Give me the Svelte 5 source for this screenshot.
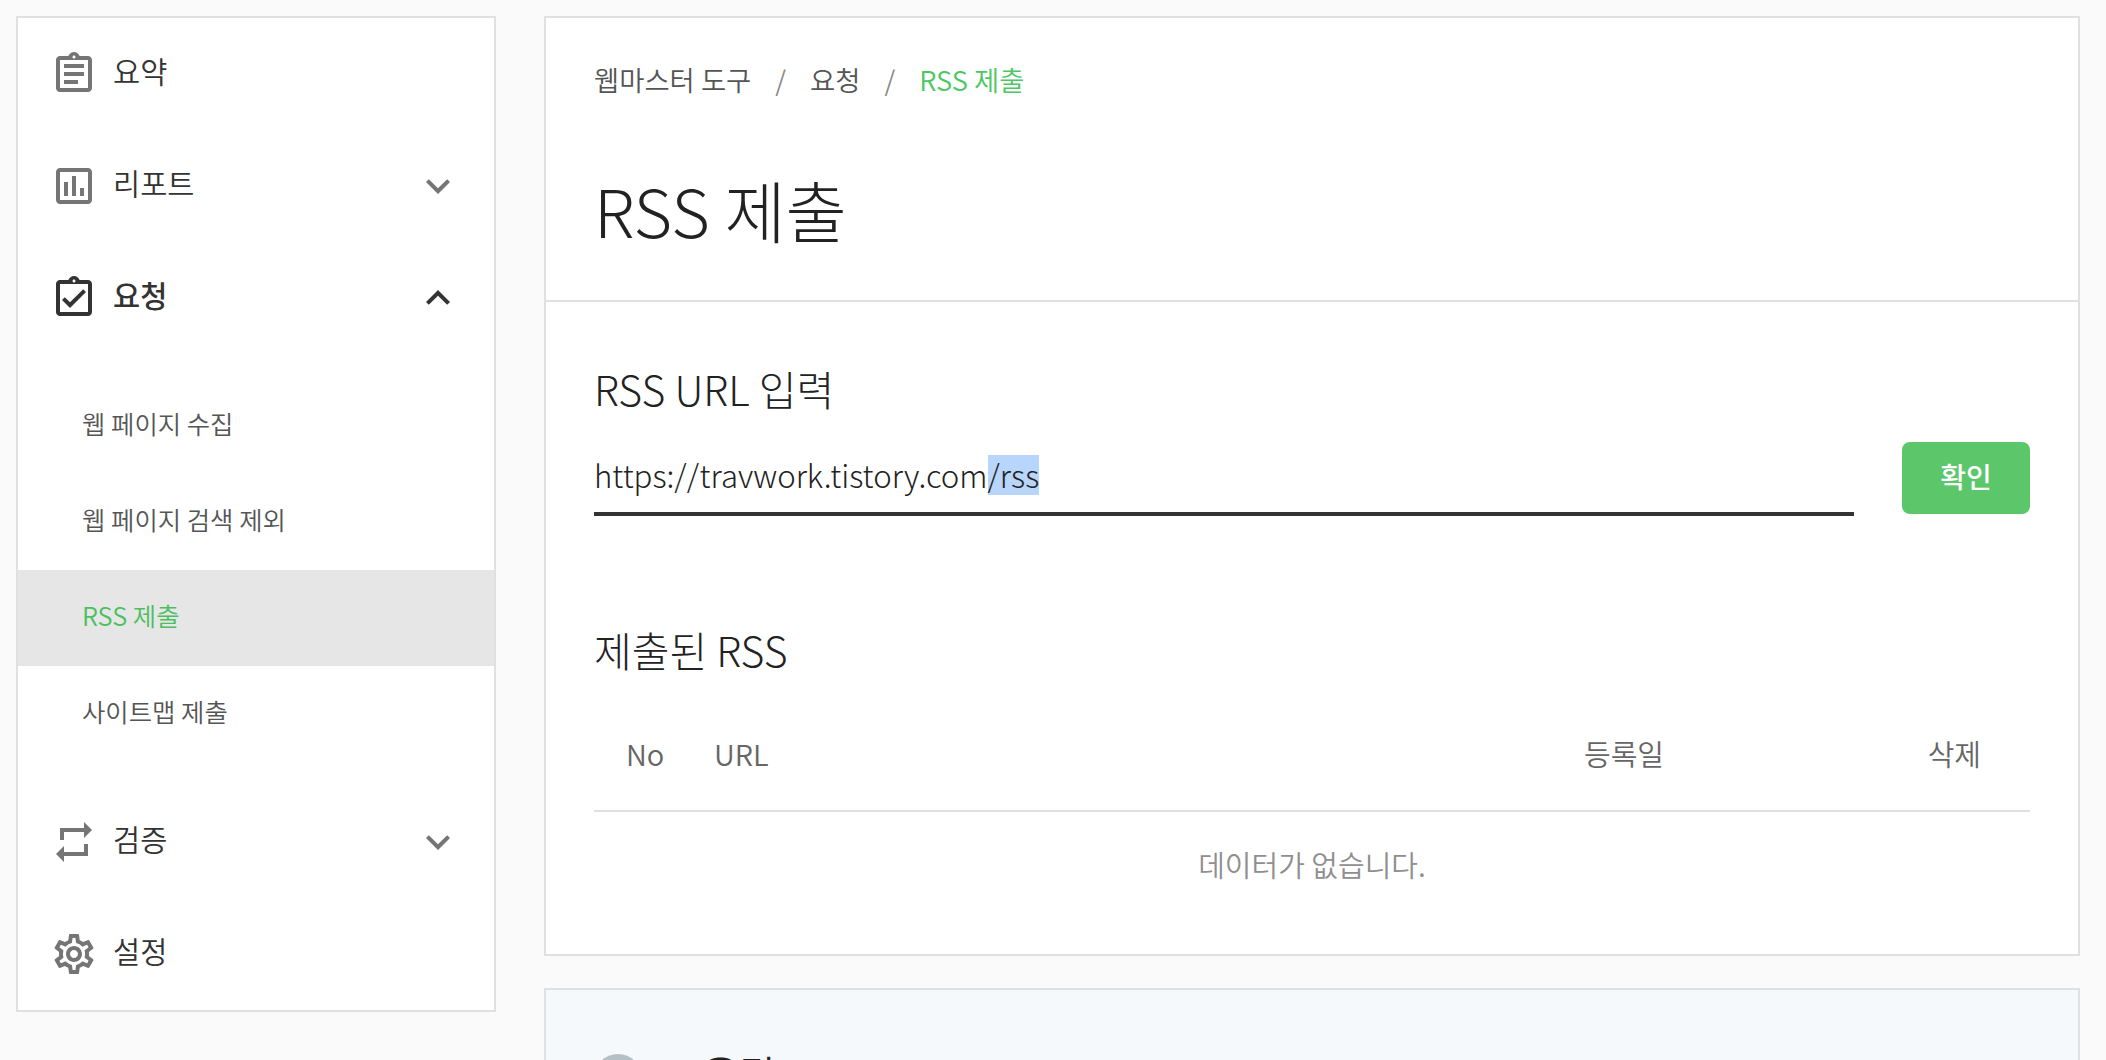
<script>
    const clip = "M19 3h-4.18C14.4 1.84 13.3 1 12 1c-1.3 0-2.4.84-2.82 2H5c-.14 0-.27.01-.4.04-.39.08-.74.28-1.01.55-.18.18-.33.4-.43.64-.1.23-.16.49-.16.77v14c0 .27.06.54.16.78s.25.45.43.64c.27.27.62.47 1.01.55.13.02.26.03.4.03h14c1.1 0 2-.9 2-2V5c0-1.1-.9-2-2-2zm-7-.25c.41 0 .75.34.75.75s-.34.75-.75.75-.75-.34-.75-.75.34-.75.75-.75zM19 19H5V5h14v14z";
    const icons = {
        summary: "M7 15h7v2H7zm0-4h10v2H7zm0-4h10v2H7z" + clip,
        report: "M19 3H5c-1.1 0-2 .9-2 2v14c0 1.1.9 2 2 2h14c1.1 0 2-.9 2-2V5c0-1.1-.9-2-2-2zm0 16H5V5h14v14zM7 10h2v7H7zm4-3h2v10h-2zm4 6h2v4h-2z",
        request: "M18 9l-1.41-1.42L10 14.17l-2.59-2.58L6 13l4 4z" + clip,
        verify: "M7 7h10v3l4-4-4-4v3H5v6h2V7zm10 10H7v-3l-4 4 4 4v-3h12v-6h-2v4z",
        settings: "M19.43 12.98c.04-.32.07-.64.07-.98 0-.34-.03-.66-.07-.98l2.11-1.65c.19-.15.24-.42.12-.64l-2-3.46c-.09-.16-.26-.25-.44-.25-.06 0-.12.01-.17.03l-2.49 1c-.52-.4-1.08-.73-1.69-.98l-.38-2.65C14.46 2.18 14.25 2 14 2h-4c-.25 0-.46.18-.49.42l-.38 2.65c-.61.25-1.17.59-1.69.98l-2.49-1c-.06-.02-.12-.03-.18-.03-.17 0-.34.09-.43.25l-2 3.46c-.13.22-.07.49.12.64l2.11 1.65c-.04.32-.07.65-.07.98 0 .33.03.66.07.98l-2.11 1.65c-.19.15-.24.42-.12.64l2 3.46c.09.16.26.25.44.25.06 0 .12-.01.17-.03l2.49-1c.52.4 1.08.73 1.69.98l.38 2.65c.03.24.24.42.49.42h4c.25 0 .46-.18.49-.42l.38-2.65c.61-.25 1.17-.59 1.69-.98l2.49 1c.06.02.12.03.18.03.17 0 .34-.09.43-.25l2-3.46c.12-.22.07-.49-.12-.64l-2.11-1.65zm-1.98-1.71c.04.31.05.52.05.73 0 .21-.02.43-.05.73l-.14 1.13.89.7 1.08.84-.7 1.21-1.27-.51-1.04-.42-.9.68c-.43.32-.84.56-1.25.73l-1.06.43-.16 1.13-.2 1.35h-1.4l-.19-1.35-.16-1.13-1.06-.43c-.43-.18-.83-.41-1.23-.71l-.91-.7-1.06.43-1.27.51-.7-1.21 1.08-.84.89-.7-.14-1.13c-.03-.31-.05-.54-.05-.74s.02-.43.05-.73l.14-1.13-.89-.7-1.08-.84.7-1.21 1.27.51 1.04.42.9-.68c.43-.32.84-.56 1.25-.73l1.06-.43.16-1.13.2-1.35h1.39l.19 1.35.16 1.13 1.06.43c.43.18.83.41 1.23.71l.91.7 1.06-.43 1.27-.51.7 1.21-1.07.85-.89.7.14 1.13zM12 8c-2.21 0-4 1.79-4 4s1.79 4 4 4 4-1.79 4-4-1.79-4-4-4zm0 6c-1.1 0-2-.9-2-2s.9-2 2-2 2 .9 2 2-.9 2-2 2z"
    };
    const chevronDown = "M16.59 8.59L12 13.17 7.41 8.59 6 10l6 6 6-6z";
    const chevronUp = "M12 8l-6 6 1.41 1.41L12 10.83l4.59 4.58L18 14z";

    const subItems = [
        { label: "웹 페이지 수집" },
        { label: "웹 페이지 검색 제외" },
        { label: "RSS 제출", active: true },
        { label: "사이트맵 제출" }
    ];
</script>

<div class="page">
    <nav class="sidebar">
        <div class="navItem">
            <svg class="icon" viewBox="0 0 24 24"><path d={icons.summary} /></svg>
            <span class="navLabel">요약</span>
        </div>
        <div class="navItem">
            <svg class="icon" viewBox="0 0 24 24"><path d={icons.report} /></svg>
            <span class="navLabel">리포트</span>
            <svg class="icon chevron" viewBox="0 0 24 24"><path d={chevronDown} /></svg>
        </div>
        <div class="navItem open">
            <svg class="icon" viewBox="0 0 24 24"><path d={icons.request} /></svg>
            <span class="navLabel">요청</span>
            <svg class="icon chevron" viewBox="0 0 24 24"><path d={chevronUp} /></svg>
        </div>
        <div class="subMenu">
            {#each subItems as item}
                <div class="subItem" class:active={item.active}>{item.label}</div>
            {/each}
        </div>
        <div class="navItem">
            <svg class="icon" viewBox="0 0 24 24"><path d={icons.verify} /></svg>
            <span class="navLabel">검증</span>
            <svg class="icon chevron" viewBox="0 0 24 24"><path d={chevronDown} /></svg>
        </div>
        <div class="navItem">
            <svg class="icon" viewBox="0 0 24 24"><path d={icons.settings} /></svg>
            <span class="navLabel">설정</span>
        </div>
    </nav>

    <main class="content">
        <section class="card">
            <header class="cardHead">
                <div class="crumbs">
                    <span>웹마스터 도구</span>
                    <span class="sep">/</span>
                    <span>요청</span>
                    <span class="sep">/</span>
                    <span class="current">RSS 제출</span>
                </div>
                <h1>RSS 제출</h1>
            </header>
            <div class="cardBody">
                <h2>RSS URL 입력</h2>
                <div class="formRow">
                    <div class="urlField">https://travwork.tistory.com<span class="selected">/rss</span></div>
                    <button class="confirm">확인</button>
                </div>
                <h2 class="listTitle">제출된 RSS</h2>
                <div class="tableHead">
                    <span class="colNo">No</span>
                    <span class="colUrl">URL</span>
                    <span class="colDate">등록일</span>
                    <span class="colDel">삭제</span>
                </div>
                <div class="empty">데이터가 없습니다.</div>
            </div>
        </section>
        <section class="help">
            <div class="helpTitle">
                <span class="helpDot"></span>
                <span class="helpLabel">도움말</span>
            </div>
        </section>
    </main>
</div>

<style>
    :global(body) {
        margin: 0;
        background: #fafafa;
        overflow: hidden;
    }

    .page {
        display: flex;
        align-items: flex-start;
        gap: 48px;
        padding: 16px 26px 0 16px;
        font-family: "Noto Sans CJK KR", "Noto Sans", sans-serif;
        color: #333;
    }

    .sidebar {
        width: 480px;
        flex: none;
        box-sizing: border-box;
        background: #fff;
        border: 2px solid #e0e0e0;
    }

    .navItem {
        display: flex;
        align-items: center;
        height: 112px;
        padding: 0 32px;
        font-size: 29.5px;
    }

    .navLabel {
        margin: 0 0 8px 15px;
        flex: 1;
        font-weight: 350;
    }

    .icon {
        width: 48px;
        height: 48px;
        fill: #757575;
        flex: none;
    }

    .open .icon {
        fill: #333;
    }

    .open .navLabel {
        font-weight: 500;
    }

    .subMenu {
        padding: 24px 0;
    }

    .subItem {
        height: 96px;
        box-sizing: border-box;
        display: flex;
        align-items: center;
        padding: 0 0 7px 64px;
        font-size: 25.4px;
        font-weight: 350;
        color: #555;
    }

    .subItem.active {
        background: #e6e6e6;
        color: #4cbf5f;
    }

    .content {
        width: 1536px;
        flex: none;
        display: flex;
        flex-direction: column;
        gap: 32px;
    }

    .card {
        box-sizing: border-box;
        height: 940px;
        background: #fff;
        border: 2px solid #e0e0e0;
    }

    .cardHead {
        height: 284px;
        box-sizing: border-box;
        padding: 39px 48px 0;
        border-bottom: 2px solid #e0e0e0;
    }

    .crumbs {
        display: flex;
        gap: 24px;
        font-size: 27.4px;
        font-weight: 350;
        color: #555;
        line-height: 44px;
    }

    .sep {
        color: #888;
    }

    .current {
        color: #4cc763;
    }

    h1 {
        margin: 60px 0 0;
        font-size: 66.5px;
        font-weight: 300;
        line-height: 96px;
        color: #222;
    }

    .cardBody {
        padding: 58px 48px 0;
    }

    h2 {
        margin: 0;
        font-size: 41px;
        font-weight: 300;
        line-height: 56px;
        color: #222;
    }

    .formRow {
        display: flex;
        align-items: flex-start;
        gap: 48px;
        margin-top: 26px;
    }

    .urlField {
        flex: 1;
        height: 74px;
        box-sizing: border-box;
        border-bottom: 4px solid #333;
        font-size: 31.2px;
        font-weight: 300;
        line-height: 40px;
        padding-top: 13px;
        color: #222;
    }

    .selected {
        display: inline-block;
        height: 40px;
        line-height: 40px;
        background: #b8d5fb;
    }

    .confirm {
        width: 128px;
        height: 72px;
        border: 0;
        border-radius: 8px;
        background: #5cc66b;
        color: #fff;
        font-family: inherit;
        font-size: 28px;
        font-weight: 500;
        padding: 0 0 5px;
    }

    .listTitle {
        margin-top: 105px;
    }

    .tableHead {
        display: grid;
        grid-template-columns: 88px 1fr 200px 306px;
        align-items: center;
        height: 116px;
        margin-top: 19px;
        padding-left: 32px;
        box-sizing: border-box;
        border-bottom: 2px solid #e0e0e0;
        font-size: 29px;
        font-weight: 350;
        color: #666;
    }

    .colDate {
        text-align: center;
    }

    .colDel {
        text-align: right;
        padding-right: 49px;
    }

    .empty {
        text-align: center;
        line-height: 104px;
        font-size: 29px;
        font-weight: 350;
        color: #8f8f8f;
    }

    .help {
        box-sizing: border-box;
        height: 300px;
        background: #f6f9fc;
        border: 2px solid #e0e0e0;
        padding: 64px 48px;
    }

    .helpTitle {
        display: flex;
        align-items: flex-start;
        gap: 22px;
        font-size: 41px;
        font-weight: 350;
        line-height: 48px;
        color: #222;
    }

    .helpLabel {
        margin-top: -5px;
    }

    .helpDot {
        width: 48px;
        height: 48px;
        border-radius: 50%;
        background: #b5bfc6;
    }
</style>
